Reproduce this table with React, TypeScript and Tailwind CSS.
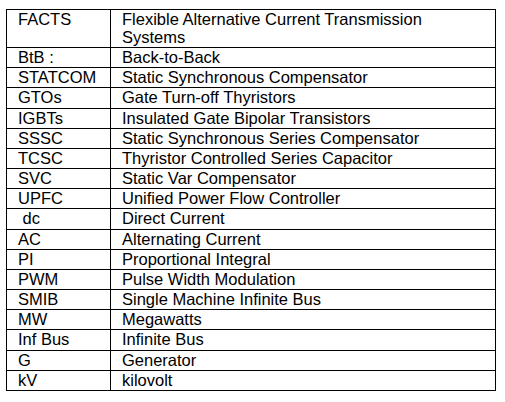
import React from 'react';

const rows: [string, string][] = [
    ['BtB :', 'Back-to-Back'],
    ['STATCOM', 'Static Synchronous Compensator'],
    ['GTOs', 'Gate Turn-off Thyristors'],
    ['IGBTs', 'Insulated Gate Bipolar Transistors'],
    ['SSSC', 'Static Synchronous Series Compensator'],
    ['TCSC', 'Thyristor Controlled Series Capacitor'],
    ['SVC', 'Static Var Compensator'],
    ['UPFC', 'Unified Power Flow Controller'],
    ['\u00a0dc', 'Direct Current'],
    ['AC', 'Alternating Current'],
    ['PI', 'Proportional Integral'],
    ['PWM', 'Pulse Width Modulation'],
    ['SMIB', 'Single Machine Infinite Bus'],
    ['MW', 'Megawatts'],
    ['Inf Bus', 'Infinite Bus'],
    ['G', 'Generator'],
    ['kV', 'kilovolt'],
];

export default function App() {
    return (
        <div className="w-[505px] h-[402px] bg-white pt-[9px] pl-[6px] text-black text-[16.5px] font-['Liberation_Sans',Arial,sans-serif]">
            <div className="w-[490px] border-t border-l border-r border-black">
                {/* first row wraps onto two lines */}
                <div className="flex h-[38px] border-b border-black leading-[18.4px]">
                    <div className="w-[104px] shrink-0 border-r border-black pl-[11px]">FACTS</div>
                    <div className="pl-[11px]">
                        Flexible Alternative Current Transmission
                        <br />
                        Systems
                    </div>
                </div>
                {rows.map(([abbr, full]) => (
                    <div key={abbr} className="flex h-[20.18px] border-b border-black leading-[19.18px]">
                        <div className="w-[104px] shrink-0 border-r border-black pl-[11px] whitespace-pre">{abbr}</div>
                        <div className="pl-[11px]">{full}</div>
                    </div>
                ))}
            </div>
        </div>
    );
}
